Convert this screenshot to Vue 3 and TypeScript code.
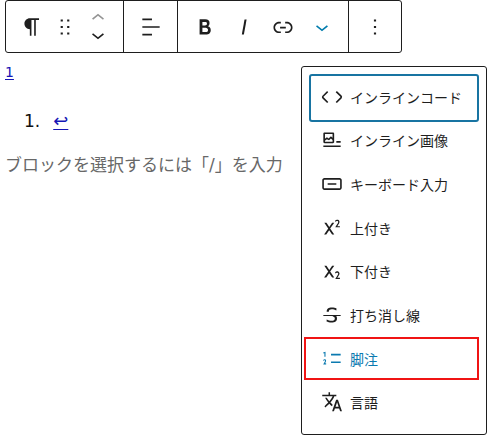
<script setup lang="ts">
interface Tool {
  label: string
  path: string
  active?: boolean
}

interface Format {
  label: string
  path: string
  state?: 'focused' | 'marked'
}

const chevronUp = 'M6.5 12.4L12 8l5.5 4.4-.9 1.2L12 10l-4.5 3.6-1-1.2z'
const chevronDown = 'M17.5 11.6L12 16l-5.5-4.4.9-1.2L12 14l4.5-3.6 1 1.2z'

const blockTools: Tool[] = [
  { label: '段落', path: 'm9.996 14v-.225l.004 0v6.225h1.5v-14.5h2.5v14.5h1.5v-14.5h3v-1.5h-8.504c-2.761 0-5 2.239-5 5 0 2.761 2.239 5 5 5z' },
  { label: 'ドラッグ', path: 'M8 7h2V5H8v2zm0 6h2v-2H8v2zm0 6h2v-2H8v2zm6-14v2h2V5h-2zm0 8h2v-2h-2v2zm0 6h2v-2h-2v2z' },
]

const alignPath = 'M4 19.8h8.9v-1.5H4v1.5zm8.9-15.6H4v1.5h8.9V4.2zm-8.9 7v1.5h16v-1.5H4z'
const morePath = 'M13 19h-2v-2h2v2zm0-6h-2v-2h2v2zm0-6h-2V5h2v2z'

const textTools: Tool[] = [
  { label: '太字', path: 'M14.7 11.3c1-.6 1.5-1.6 1.5-3 0-2.3-1.3-3.4-4-3.4H7v14h5.8c1.4 0 2.5-.3 3.3-1 .8-.7 1.2-1.7 1.2-2.9.1-1.9-.8-3.1-2.6-3.7zm-5.1-4h2.3c.6 0 1.1.1 1.4.4.3.3.5.7.5 1.2s-.2 1-.5 1.2c-.3.3-.8.4-1.4.4H9.6V7.3zm4.6 9c-.4.3-1 .4-1.7.4H9.6v-3.9h2.9c.7 0 1.3.2 1.7.5.4.3.6.8.6 1.5s-.2 1.2-.6 1.5z' },
  { label: 'イタリック', path: 'M12.5 5L10 19h1.9l2.5-14z' },
  { label: 'リンク', path: 'M15.6 7.2H14v1.5h1.6c2 0 3.7 1.7 3.7 3.7s-1.7 3.7-3.7 3.7H14v1.5h1.6c2.8 0 5.2-2.3 5.2-5.2 0-2.9-2.3-5.2-5.2-5.2zM4.7 12.4c0-2 1.7-3.7 3.7-3.7H10V7.2H8.4c-2.9 0-5.2 2.3-5.2 5.2 0 2.9 2.3 5.2 5.2 5.2H10v-1.5H8.4c-2 0-3.7-1.7-3.7-3.7zm4.6.9h5.3v-1.5H9.3v1.5z' },
  { label: 'さらに表示', path: chevronDown, active: true },
]

const formats: Format[] = [
  { label: 'インラインコード', state: 'focused', path: 'M20.8 10.7l-4.3-4.3-1.1 1.1 4.3 4.3c.1.1.1.3 0 .4l-4.3 4.3 1.1 1.1 4.3-4.3c.7-.8.7-1.9 0-2.6zM4.2 11.8l4.3-4.3-1-1-4.3 4.3c-.7.7-.7 1.8 0 2.5l4.3 4.3 1.1-1.1-4.3-4.3c-.2-.1-.2-.3-.1-.4z' },
  { label: 'インライン画像', path: 'M4 18.5h16V17H4v1.5zM16 13v1.5h4V13h-4zM5.1 15h7.8c.6 0 1.1-.5 1.1-1.1V6.1c0-.6-.5-1.1-1.1-1.1H5.1C4.5 5 4 5.5 4 6.1v7.8c0 .6.5 1.1 1.1 1.1zm.4-8.5h7V10l-1-1c-.3-.3-.8-.3-1 0l-1.6 1.5-1.2-.7c-.3-.2-.6-.2-.9 0l-1.3 1V6.5zm0 6.1l1.8-1.3 1.3.8c.3.2.7.2.9-.1l1.5-1.4 1.5 1.4v1.5h-7v-.9z' },
  { label: 'キーボード入力', path: 'M19 6.5H5c-1.1 0-2 .9-2 2v7c0 1.1.9 2 2 2h14c1.1 0 2-.9 2-2v-7c0-1.1-.9-2-2-2zm.5 9c0 .3-.2.5-.5.5H5c-.3 0-.5-.2-.5-.5v-7c0-.3.2-.5.5-.5h14c.3 0 .5.2.5.5v7zM8 12.8h8v-1.5H8v1.5z' },
  { label: '上付き', path: 'M16.9 10.3l.8-1.2c.4-.6.7-1.2.9-1.6.2-.4.3-.8.3-1.2 0-.3-.1-.7-.3-1-.1-.3-.4-.5-.6-.7-.3-.2-.6-.3-1-.3s-.8.1-1.1.2c-.3.1-.7.3-1 .6l.2 1.3c.3-.3.5-.5.8-.6s.6-.2.9-.2c.3 0 .5.1.7.2.2.2.2.4.2.7 0 .3-.1.5-.2.8-.1.3-.4.7-.8 1.3L15 11.4h4.3v-1.1h-2.4zM14.1 7.2h-2L9.5 11 6.9 7.2h-2l3.6 5.3L4.7 18h2l2.7-4 2.7 4h2l-3.8-5.5 3.8-5.3z' },
  { label: '下付き', path: 'M16.9 18.3l.8-1.2c.4-.6.7-1.2.9-1.6.2-.4.3-.8.3-1.2 0-.3-.1-.7-.3-1-.1-.3-.4-.5-.6-.7-.3-.2-.6-.3-1-.3s-.8.1-1.1.2c-.3.1-.7.3-1 .6l.2 1.3c.3-.3.5-.5.8-.6s.6-.2.9-.2c.3 0 .5.1.7.2.2.2.2.4.2.7 0 .3-.1.5-.2.8-.1.3-.4.7-.8 1.3L15 19.4h4.3v-1.1h-2.4zM14.1 7.2h-2L9.5 11 6.9 7.2h-2l3.6 5.3L4.7 18h2l2.7-4 2.7 4h2l-3.8-5.5 3.8-5.3z' },
  { label: '打ち消し線', path: 'M9.1 9v-.5c0-.6.2-1.1.7-1.4.5-.3 1.2-.5 2-.5.7 0 1.4.1 2.1.3.7.2 1.4.5 2.1.9l.2-1.9c-.6-.3-1.2-.5-1.9-.7-.8-.1-1.6-.2-2.4-.2-1.5 0-2.7.3-3.6 1-.8.7-1.2 1.5-1.2 2.6V9h2zM20 12H4v1h8.3c.3.1.6.2.8.3.5.2.9.5 1.1.8.3.3.4.7.4 1.2 0 .7-.2 1.1-.8 1.5-.5.3-1.2.5-2.1.5-.8 0-1.6-.1-2.4-.3-.8-.2-1.5-.5-2.2-.8L7 18.1c.5.2 1.2.4 2 .6.8.2 1.6.3 2.4.3 1.7 0 3-.3 3.9-1 .9-.7 1.3-1.6 1.3-2.8 0-.9-.2-1.7-.7-2.2H20v-1z' },
  { label: '脚注', state: 'marked', path: 'M11.1 15.8H20v-1.5h-8.9v1.5zm0-8.6v1.5H20V7.2h-8.9zM5 6.7V10h1V5.3L3.8 6l.4 1 .8-.3zm-.4 5.7c-.3.1-.5.2-.7.3l.1 1.1c.2-.2.5-.4.8-.5.3-.1.6 0 .7.1.2.3 0 .8-.2 1.1-.5.8-.9 1.6-1.4 2.5h2.7v-1h-1c.3-.6.8-1.4.9-2.1.1-.3 0-.8-.2-1.1-.5-.6-1.3-.5-1.7-.4z' },
  { label: '言語', path: 'M17.5 10h-1.7l-3.7 10.5h1.7l.9-2.6h3.9l.9 2.6h1.7L17.5 10zm-2.2 6.3 1.4-4 1.4 4h-2.8zm-4.8-3.8c1.6-1.8 2.9-3.6 3.7-5.7H16V5.2h-5.8V3H8.8v2.2H3v1.5h9.6c-.7 1.6-1.8 3.1-3.1 4.6C8.6 10.2 7.8 9 7.2 8H5.6c.6 1.4 1.7 2.9 2.9 4.4l-2.4 2.4c-.3.4-.7.8-1.1 1.2l1 1 1.2-1.2c.8-.8 1.6-1.5 2.3-2.3.8.9 1.7 1.7 2.5 2.5l.6-1.5c-.7-.6-1.4-1.3-2.1-2z' },
]
</script>

<template>
  <main class="editor">
    <div class="toolbar" role="toolbar">
      <div class="group block-group">
        <button v-for="tool in blockTools" :key="tool.label" type="button" class="tool narrow" :aria-label="tool.label">
          <svg class="icon" viewBox="0 0 24 24"><path :d="tool.path" /></svg>
        </button>
        <div class="movers">
          <button type="button" class="mover" aria-label="上に移動" disabled>
            <svg class="icon" viewBox="0 0 24 24"><path :d="chevronUp" /></svg>
          </button>
          <button type="button" class="mover" aria-label="下に移動">
            <svg class="icon" viewBox="0 0 24 24"><path :d="chevronDown" /></svg>
          </button>
        </div>
      </div>
      <div class="group single">
        <button type="button" class="tool" aria-label="配置">
          <svg class="icon" viewBox="0 0 24 24"><path :d="alignPath" /></svg>
        </button>
      </div>
      <div class="group text-group">
        <button
          v-for="tool in textTools"
          :key="tool.label"
          type="button"
          class="tool"
          :class="{ active: tool.active }"
          :aria-label="tool.label"
        >
          <svg class="icon" viewBox="0 0 24 24"><path :d="tool.path" /></svg>
        </button>
      </div>
      <div class="group options">
        <button type="button" class="tool" aria-label="オプション">
          <svg class="icon" viewBox="0 0 24 24"><path :d="morePath" /></svg>
        </button>
      </div>
    </div>

    <div class="body">
      <article class="document">
        <p class="reference"><a href="#note-1">1</a></p>
        <ol class="notes">
          <li id="note-1"><a href="#note-1">↩</a></li>
        </ol>
        <p class="placeholder">ブロックを選択するには「/」を入力</p>
      </article>

      <div class="menu" role="menu">
        <button
          v-for="format in formats"
          :key="format.label"
          type="button"
          role="menuitem"
          class="item"
          :class="format.state"
        >
          <svg class="icon" viewBox="0 0 24 24"><path :d="format.path" /></svg>
          <span>{{ format.label }}</span>
        </button>
      </div>
    </div>
  </main>
</template>

<style>
body {
  margin: 0;
  background: #fff;
}
</style>

<style scoped>
.editor {
  box-sizing: border-box;
  padding: 0 6px 7px 5px;
  color: #1e1e1e;
  font-family: "DejaVu Sans", "Noto Sans CJK JP", sans-serif;
}

button {
  display: flex;
  align-items: center;
  justify-content: center;
  margin: 0;
  padding: 0;
  border: 0;
  background: none;
  color: inherit;
  font: inherit;
}

.icon {
  display: block;
  flex: none;
  width: 26px;
  height: 26px;
  fill: currentColor;
}

.toolbar {
  display: flex;
  box-sizing: border-box;
  width: fit-content;
  border: 1px solid #1e1e1e;
  border-radius: 3px;
}

.group {
  display: flex;
  align-items: center;
  min-height: 51px;
}

.group + .group {
  border-left: 1px solid #1e1e1e;
}

.block-group {
  padding: 0 9px;
}

.tool {
  width: 39px;
  height: 51px;
}

.narrow {
  width: 33px;
}

.single {
  padding: 0 7px;
}

.options {
  padding: 0 7px 0 6px;
}

.text-group {
  padding: 0 7px;
}

.active {
  color: #007cad;
}

.movers {
  display: flex;
  flex-direction: column;
}

.mover {
  width: 33px;
  height: 17px;
}

.mover:disabled {
  color: #949494;
}

.body {
  display: flex;
  align-items: flex-start;
}

.document {
  flex: 1;
  min-width: 0;
  padding-top: 7px;
  color: #111;
  font-size: 17px;
  line-height: 24px;
}

.document a {
  color: #1515b5;
  text-underline-offset: 2px;
}

.reference {
  margin: 0;
  font-size: 14px;
}

.notes {
  margin: 25px 0 20px;
  padding-left: 19px;
  list-style: none;
  counter-reset: note;
}

.notes li {
  display: flex;
  gap: 13px;
  counter-increment: note;
}

.notes li::before {
  content: counter(note) ".";
}

.notes a {
  font-size: 18px;
}

.placeholder {
  margin: 0;
  color: #686868;
  white-space: nowrap;
}

.menu {
  display: grid;
  grid-auto-rows: 1fr;
  flex: none;
  box-sizing: border-box;
  width: 186px;
  min-height: 369px;
  margin-top: 13px;
  padding: 8px 7px 10px;
  border: 1px solid #1e1e1e;
  border-radius: 3px;
  font-family: "Noto Sans CJK JP", sans-serif;
  font-size: 14px;
}

.item {
  position: relative;
  justify-content: flex-start;
  gap: 5px;
  padding: 0 10px;
  line-height: 20px;
  white-space: nowrap;
}

.focused::after,
.marked::after {
  position: absolute;
  content: "";
}

.focused::after {
  inset: -1px 0 -3px;
  border: 2px solid #1874a2;
  border-radius: 3px;
}

.marked {
  color: #0b7ab0;
}

.marked::after {
  inset: 0 0 0 -5px;
  border: 2px solid #f01414;
}
</style>
